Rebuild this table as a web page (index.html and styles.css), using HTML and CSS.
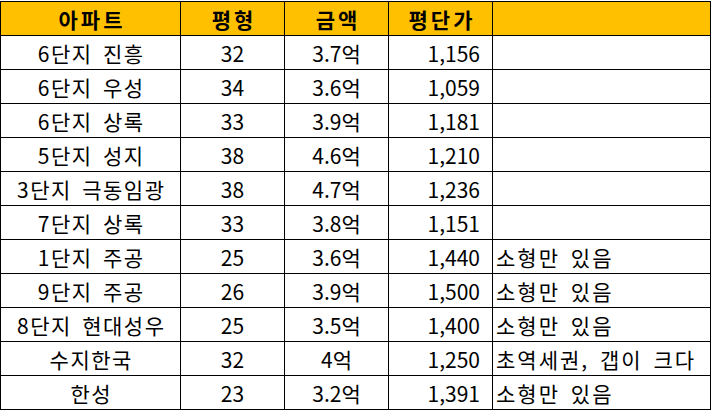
FILE: index.html
```html
<!DOCTYPE html>
<html lang="ko">
<head>
<meta charset="utf-8">
<title>아파트 평단가</title>
<link rel="stylesheet" href="styles.css">
</head>
<body>
<table class="sheet">
  <colgroup>
    <col class="c-name"><col class="c-num"><col class="c-num"><col class="c-num"><col class="c-note">
  </colgroup>
  <thead>
    <tr><th>아파트</th><th>평형</th><th>금액</th><th>평단가</th><th></th></tr>
  </thead>
  <tbody>
    <tr><td class="name">6단지 진흥</td><td class="ctr">32</td><td class="ctr">3.7억</td><td class="rt">1,156</td><td class="note"></td></tr>
    <tr><td class="name">6단지 우성</td><td class="ctr">34</td><td class="ctr">3.6억</td><td class="rt">1,059</td><td class="note"></td></tr>
    <tr><td class="name">6단지 상록</td><td class="ctr">33</td><td class="ctr">3.9억</td><td class="rt">1,181</td><td class="note"></td></tr>
    <tr><td class="name">5단지 성지</td><td class="ctr">38</td><td class="ctr">4.6억</td><td class="rt">1,210</td><td class="note"></td></tr>
    <tr><td class="name">3단지 극동임광</td><td class="ctr">38</td><td class="ctr">4.7억</td><td class="rt">1,236</td><td class="note"></td></tr>
    <tr><td class="name">7단지 상록</td><td class="ctr">33</td><td class="ctr">3.8억</td><td class="rt">1,151</td><td class="note"></td></tr>
    <tr><td class="name">1단지 주공</td><td class="ctr">25</td><td class="ctr">3.6억</td><td class="rt">1,440</td><td class="note">소형만 있음</td></tr>
    <tr><td class="name">9단지 주공</td><td class="ctr">26</td><td class="ctr">3.9억</td><td class="rt">1,500</td><td class="note">소형만 있음</td></tr>
    <tr><td class="name">8단지 현대성우</td><td class="ctr">25</td><td class="ctr">3.5억</td><td class="rt">1,400</td><td class="note">소형만 있음</td></tr>
    <tr><td class="name">수지한국</td><td class="ctr">32</td><td class="ctr">4억</td><td class="rt">1,250</td><td class="note">초역세권, 갭이 크다</td></tr>
    <tr><td class="name">한성</td><td class="ctr">23</td><td class="ctr">3.2억</td><td class="rt">1,391</td><td class="note">소형만 있음</td></tr>
  </tbody>
</table>
</body>
</html>
```
FILE: styles.css
```css
html, body {
  margin: 0;
  padding: 0;
  background: #ffffff;
}
body {
  padding-top: 1px;
  font-family: "Noto Sans CJK KR", "Noto Sans", sans-serif;
  color: #000000;
}
.sheet {
  table-layout: fixed;
  border-collapse: separate;
  border-spacing: 1px;
  background: #000000;
  width: 711px;
}
.c-name { width: 179px; }
.c-num { width: 103px; }
.c-note { width: 217px; }
.sheet th,
.sheet td {
  height: 33px;
  padding: 0;
  font-size: 21px;
  line-height: 24px;
  vertical-align: middle;
  white-space: nowrap;
  overflow: hidden;
}
.sheet th {
  background: #ffc000;
  font-weight: 700;
  text-align: center;
  letter-spacing: 3px;
  padding-left: 3px;
}
.sheet td {
  background: #ffffff;
  font-weight: 400;
}
.sheet .name {
  text-align: center;
  letter-spacing: 1.5px;
  word-spacing: 3px;
  padding-left: 1.5px;
}
.sheet .ctr { text-align: center; }
.sheet .rt { text-align: right; padding-right: 12px; }
.sheet .note {
  text-align: left;
  padding-left: 3px;
  letter-spacing: 2px;
  word-spacing: 3px;
}
```
